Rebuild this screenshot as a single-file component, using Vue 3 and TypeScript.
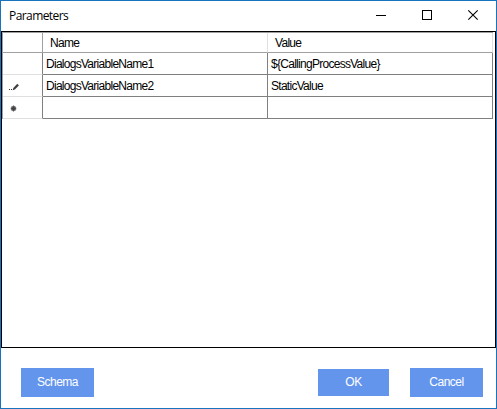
<script setup lang="ts">
interface Parameter {
  name: string
  value: string
  state: 'idle' | 'editing' | 'new'
}

const rows: Parameter[] = [
  { name: 'DialogsVariableName1', value: '${CallingProcessValue}', state: 'idle' },
  { name: 'DialogsVariableName2', value: 'StaticValue', state: 'editing' },
  { name: '', value: '', state: 'new' },
]
</script>

<template>
  <div class="window">
    <header class="titlebar">
      <span class="title">Parameters</span>
      <div class="controls">
        <svg width="12" height="12" viewBox="0 0 12 12" shape-rendering="crispEdges"><path d="M1 6h10v1H1z" /></svg>
        <svg width="12" height="12" viewBox="0 0 12 12" shape-rendering="crispEdges"><rect x="1.5" y="1.5" width="9" height="9" fill="none" stroke="#000" /></svg>
        <svg width="12" height="12" viewBox="0 0 12 12"><path d="M1.3 1.3l9.4 9.4M10.7 1.3l-9.4 9.4" stroke="#000" stroke-width="1.1" /></svg>
      </div>
    </header>

    <main class="grid-box">
      <div class="grid">
        <div class="row head">
          <div class="marker"></div>
          <div class="cell"><span class="label">Name</span></div>
          <div class="cell"><span class="label">Value</span></div>
        </div>
        <div v-for="(row, i) in rows" :key="i" class="row">
          <div class="marker">
            <svg v-if="row.state === 'editing'" class="pencil" width="12" height="9" viewBox="0 0 12 9">
              <path d="M1 6h1v1H1zM3 6h1v1H3z" fill="#333" />
              <path d="M4.6 7.2l.7-2.3L9.3 .8l1.6 1.6-4 4z" fill="#404040" />
            </svg>
            <svg v-else-if="row.state === 'new'" class="star" width="7" height="7" viewBox="0 0 7 7">
              <circle cx="3.5" cy="3.5" r="2.8" fill="#777" />
              <path d="M3.5 .6v5.8M1 3.5h5" stroke="#555" />
              <circle cx="3.5" cy="3.5" r="1.6" fill="#404040" />
            </svg>
          </div>
          <div class="cell"><span class="text">{{ row.name }}</span></div>
          <div class="cell"><span class="text">{{ row.value }}</span></div>
        </div>
      </div>
    </main>

    <footer class="actions">
      <button class="button schema">Schema</button>
      <button class="button ok">OK</button>
      <button class="button">Cancel</button>
    </footer>
  </div>
</template>

<style>
body {
  margin: 0;
  overflow: hidden;
}
</style>

<style scoped>
.window {
  box-sizing: border-box;
  width: 497px;
  height: 409px;
  display: flex;
  flex-direction: column;
  border: 1px solid #1874bf;
  background: #fff;
  color: #000;
  font-family: "Liberation Sans", Arial, sans-serif;
  font-size: 12px;
}
.titlebar {
  height: 30px;
  flex: none;
  display: flex;
  align-items: center;
  justify-content: space-between;
  padding: 0 17px 0 8px;
  font-family: "Open Sans", "Noto Sans", sans-serif;
}
.title {
  font-size: 12px;
  letter-spacing: -0.58px;
  padding-bottom: 1px;
}
.controls {
  display: flex;
  gap: 34px;
  padding-bottom: 2px;
}
.controls svg {
  display: block;
}
.grid-box {
  box-sizing: border-box;
  height: 317px;
  flex: none;
  border: 1px solid #000;
}
.grid {
  width: 491px;
  border-top: 1px solid #a0a0a0;
  border-left: 1px solid #a0a0a0;
  box-sizing: border-box;
}
.row {
  display: grid;
  grid-template-columns: 40px 225px 225px;
  height: 22px;
}
.row > div {
  box-sizing: border-box;
  display: flex;
  align-items: center;
  border-right: 1px solid #808080;
  border-bottom: 1px solid #808080;
  white-space: nowrap;
}
.row > .marker {
  border-bottom-color: #e0e0e0;
  padding-left: 5px;
}
.row.head {
  height: 20px;
}
.row.head > div {
  border-bottom-color: #a0a0a0;
  border-right-color: #e0e0e0;
}
.row.head > .marker {
  border-right-color: #a0a0a0;
}
.pencil {
  margin-top: 3px;
}
.star {
  margin-left: 2px;
  margin-top: 1px;
}
.label {
  padding-left: 7px;
  letter-spacing: -0.7px;
}
.text {
  padding-left: 3px;
  letter-spacing: -0.72px;
}
.actions {
  flex: 1;
  display: flex;
  align-items: center;
  padding: 9px 13px 0 20px;
}
.button {
  width: 73px;
  height: 29px;
  border: 0;
  padding: 0 0 1px;
  background: #6495ed;
  color: #fff;
  font: inherit;
  letter-spacing: -0.5px;
}
.schema {
  margin-right: auto;
}
.ok {
  width: 71px;
  height: 27px;
  margin-right: 21px;
}
</style>
